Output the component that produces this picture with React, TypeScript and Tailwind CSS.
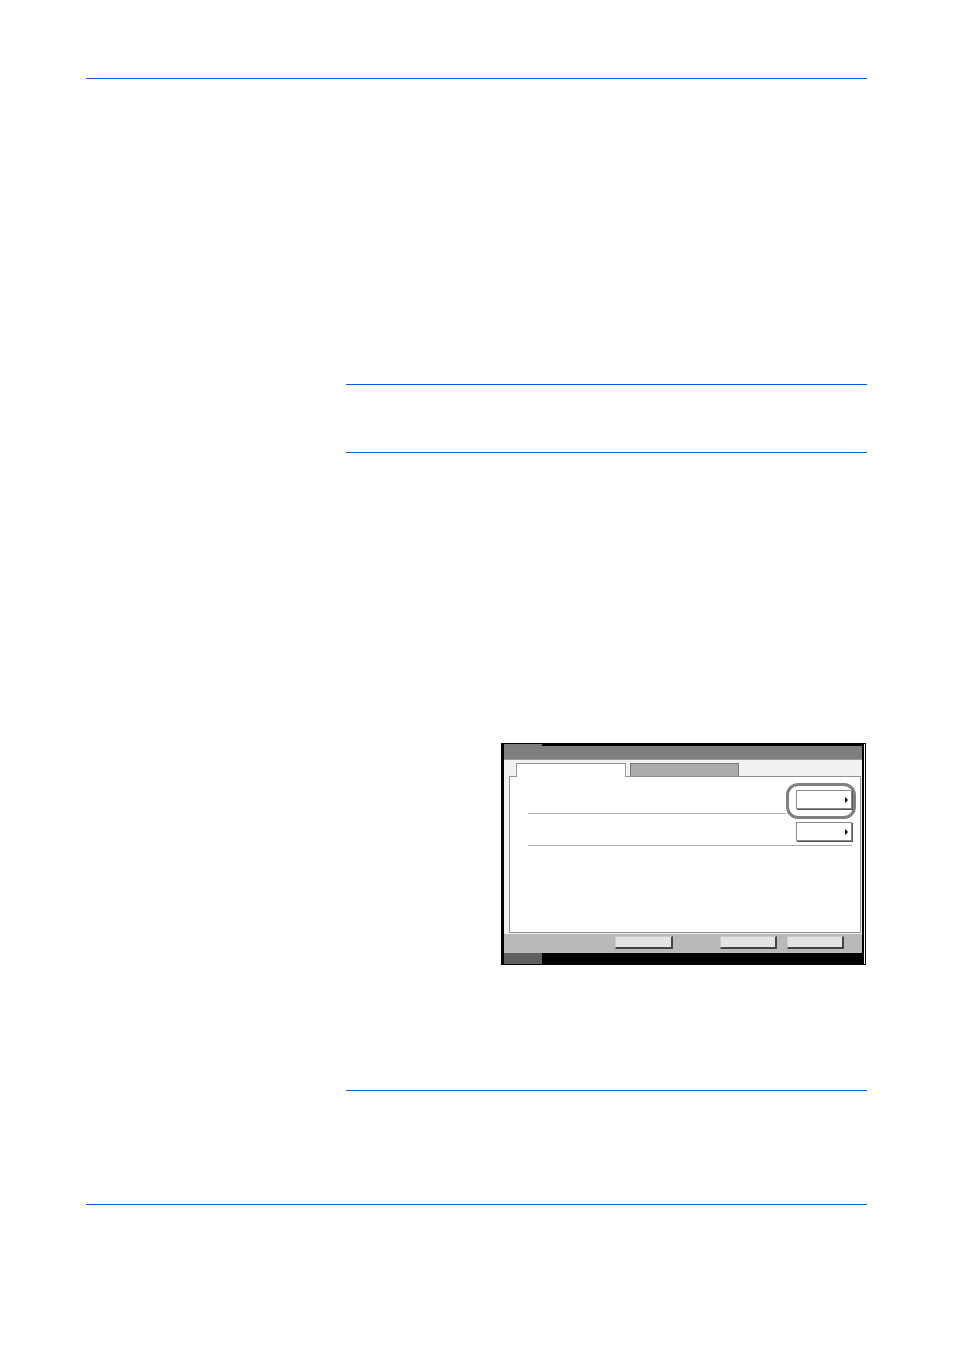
import React from "react"

// 파란 구분선
function Rule({ className = "" }: { className?: string }) {
  return <div className={`h-px bg-[#0058e6] ${className}`} />
}

function PanelButton() {
  return (
    <div className="relative w-[56px] h-[19px] bg-white border border-[#8a8a8a] shadow-[1px_1px_0_#555]">
      <div className="absolute right-[3px] top-1/2 -translate-y-1/2 w-0 h-0 border-y-[3px] border-y-transparent border-l-[3px] border-l-black" />
    </div>
  )
}

function FooterButton({ w }: { w: string }) {
  return (
    <div
      className={`${w} h-[13px] bg-[#e3e3e3] border-t border-l border-[#c8c8c8] border-r-2 border-b-2 border-r-[#444] border-b-[#444]`}
    />
  )
}

// 조작 패널 스크린샷
function ScreenPanel() {
  return (
    <div className="w-[365px] h-[222px] border border-black bg-white pr-px flex flex-col">
      <div className="flex-1 border-l-2 border-r-2 border-black flex flex-col">
        <div className="h-[2px] flex">
          <div className="w-[38px] bg-[#7a7a7a]" />
          <div className="flex-1 bg-black" />
        </div>
        <div className="h-[14px] bg-[#7e7e7e] border-b border-[#9a9a9a]" />
        <div className="h-[16px] bg-[#f1f1f1] flex items-end pl-[12px] gap-[4px]">
          <div className="w-[110px] h-[14px] bg-white border-t border-x border-[#9a9a9a] -mb-px relative z-10" />
          <div className="w-[109px] h-[13px] bg-[#ababab] border border-[#777] border-b-0" />
        </div>
        <div className="flex-1 bg-[#f1f1f1] pl-[5px] pr-[1px] pb-[1px] flex">
          <div className="flex-1 bg-white border border-[#8f8f8f] pl-[18px] pr-[8px] pt-[13px] flex flex-col">
            <div className="flex justify-end">
              <div className="relative">
                <div className="absolute -left-[10px] -right-[4px] -top-[7px] -bottom-[10px] border-[3px] border-[#808080] rounded-[12px]" />
                <PanelButton />
              </div>
            </div>
            <div className="h-[4px]" />
            <div className="h-px bg-[#aaa] mr-[66px]" />
            <div className="h-[8px]" />
            <div className="flex justify-end">
              <PanelButton />
            </div>
            <div className="h-[4px]" />
            <div className="h-px bg-[#aaa]" />
          </div>
        </div>
        <div className="h-[19px] bg-[#b9b9b9] flex items-start pt-[2px] pl-[111px]">
          <FooterButton w="w-[58px]" />
          <div className="w-[47px]" />
          <FooterButton w="w-[57px]" />
          <div className="w-[10px]" />
          <FooterButton w="w-[57px]" />
        </div>
        <div className="h-[11px] flex">
          <div className="w-[38px] bg-[#5f5f5f]" />
          <div className="flex-1 bg-black" />
        </div>
      </div>
    </div>
  )
}

export default function App() {
  return (
    <div className="w-[954px] h-[1350px] bg-white pt-[78px] font-['Liberation_Sans',sans-serif]">
      <Rule className="ml-[86px] w-[781px]" />
      <div className="ml-[346px] w-[521px]">
        <Rule className="mt-[305px]" />
        <Rule className="mt-[67px]" />
        <div className="mt-[290px] flex justify-end pr-px">
          <ScreenPanel />
        </div>
        <Rule className="mt-[125px]" />
      </div>
      <Rule className="mt-[113px] ml-[86px] w-[781px]" />
    </div>
  )
}
